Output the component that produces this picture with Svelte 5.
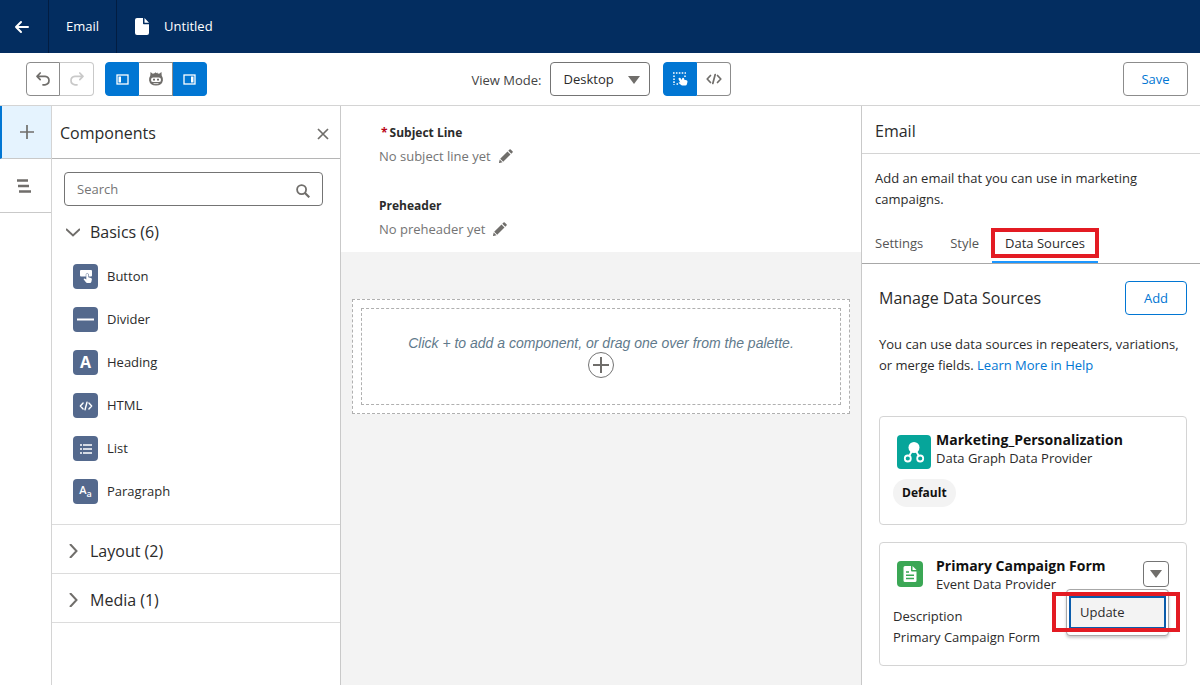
<script>
    let search = "";
    let viewMode = "Desktop";
    let activeTab = "Data Sources";
    let menuOpen = true;

    let basics = [
        { icon: "button", label: "Button" },
        { icon: "divider", label: "Divider" },
        { icon: "heading", label: "Heading" },
        { icon: "html", label: "HTML" },
        { icon: "list", label: "List" },
        { icon: "paragraph", label: "Paragraph" },
    ];

    let groups = [
        { name: "Basics", count: 6, open: true, items: basics },
        { name: "Layout", count: 2, open: false, items: [] },
        { name: "Media", count: 1, open: false, items: [] },
    ];

    let fields = [
        { label: "Subject Line", value: "No subject line yet", required: true },
        { label: "Preheader", value: "No preheader yet", required: false },
    ];

    let tabs = ["Settings", "Style", "Data Sources"];

    function toggleGroup(group) {
        group.open = !group.open;
        groups = groups;
    }
</script>

<div class="page">
    <header>
        <button class="back" aria-label="Back">
            <svg width="16" height="14" viewBox="0 0 16 14" fill="none" stroke="#fff" stroke-width="2" stroke-linecap="round" stroke-linejoin="round"><path d="M14 7H2M7 2L2 7l5 5" /></svg>
        </button>
        <div class="crumb">Email</div>
        <div class="doc">
            <svg width="14" height="17" viewBox="0 0 14 17" fill="#fff"><path d="M2 0h6v5.500q0 .8.800.800H14V15q0 2-2 2H2q-2 0-2-2V2Q0 0 2 0zM9.500 0L14 4.800H9.500z" /></svg>
            <span>Untitled</span>
        </div>
    </header>

    <div class="toolbar">
        <div class="tools">
            <div class="group">
                <button aria-label="Undo">
                    <svg width="16" height="16" viewBox="0 0 16 16" fill="none" stroke="#706e6b" stroke-width="1.700" stroke-linecap="round" stroke-linejoin="round"><path d="M5.200 2L2 5.300l3.200 3.300M2 5.300h8q4 .5 4 4.300t-4 4.200H8" /></svg>
                </button>
                <button class="off" aria-label="Redo" disabled>
                    <svg width="16" height="16" viewBox="0 0 16 16" fill="none" stroke="#c9c9c9" stroke-width="1.700" stroke-linecap="round" stroke-linejoin="round"><path d="M10.800 2L14 5.300l-3.200 3.300M14 5.300H6q-4 .5-4 4.300t4 4.200h2" /></svg>
                </button>
            </div>
            <div class="group">
                <button class="on" aria-label="Left panel">
                    <svg width="13" height="11" viewBox="0 0 13 11"><rect x="1" y="1" width="11" height="9" fill="none" stroke="#fff" stroke-width="1.300" /><path d="M2.500 2.500h2.500v6H2.500z" fill="#fff" /></svg>
                </button>
                <button aria-label="Einstein">
                    <svg width="14" height="14" viewBox="0 0 14 14"><path d="M1.500 0l2.300 1.800 1.700-.6L6.500.3l.8.9.9-.7.6.9 1.300.4L12.500 0l.2 3.600Q14 5.500 13.900 8.500 13 13.500 7 13.500T.1 8.500Q0 5.500 1.300 3.600z" fill="#706e6b" /><rect x="2" y="5.500" width="10" height="4.600" rx="2.200" fill="#fff" /><path d="M4 7.600h2M8 7.600h2" stroke="#706e6b" stroke-width="1.600" /><path d="M4.500 11.600h5" stroke="#fff" stroke-width=".8" /></svg>
                </button>
                <button class="on" aria-label="Right panel">
                    <svg width="13" height="11" viewBox="0 0 13 11"><rect x="1" y="1" width="11" height="9" fill="none" stroke="#fff" stroke-width="1.300" /><path d="M8 2.500h2.500v6H8z" fill="#fff" /></svg>
                </button>
            </div>
        </div>

        <div class="view">
            <label for="view-mode">View Mode:</label>
            <div class="select">
                <select id="view-mode" bind:value={viewMode}>
                    <option>Desktop</option>
                    <option>Mobile</option>
                </select>
                <svg width="12" height="8" viewBox="0 0 12 8"><path d="M0 0h12L6 8z" fill="#706e6b" /></svg>
            </div>
            <div class="group">
                <button class="on" aria-label="Canvas view">
                    <svg width="16" height="16" viewBox="0 0 16 16"><path d="M1 2h13M2 4.500V14M13 4.500V7M4.500 13H7" fill="none" stroke="#fff" stroke-width="1.500" stroke-dasharray="1.600 1.300" /><path d="M6.800 7q1-.8 1.800.3l1.200 1.700.5-2q1.200-.8 1.800.4l.2 1.400 2.200.4q1 .4 1 1.500l-.6 2.500q-.3 1.300-1.600 1.300h-3q-.9 0-1.500-.8L6.500 11.800q.3-1 1.500-.5l.3.1L6.600 8.200q-.2-.8.200-1.200z" fill="#fff" /></svg>
                </button>
                <button aria-label="Code view">
                    <svg width="16" height="12" viewBox="0 0 16 12" fill="none" stroke="#706e6b" stroke-width="1.700" stroke-linecap="round" stroke-linejoin="round"><path d="M4.500 2.500L1.200 6l3.300 3.500M11.500 2.500L14.800 6l-3.300 3.500M9.200 1.500l-2.400 9" /></svg>
                </button>
            </div>
        </div>

        <button class="save">Save</button>
    </div>

    <main>
        <nav>
            <button class="current" aria-label="Components">
                <svg width="14" height="14" viewBox="0 0 14 14" stroke="#706e6b" stroke-width="1.700"><path d="M7 0v14M0 7h14" /></svg>
            </button>
            <button aria-label="Structure">
                <svg width="14" height="14" viewBox="0 0 14 14" stroke="#706e6b" stroke-width="2.600"><path d="M0 1.500h11M1 7h11M2 12.500h12" /></svg>
            </button>
        </nav>

        <aside class="palette">
            <div class="palette-head">
                <h2>Components</h2>
                <button aria-label="Close">
                    <svg width="12" height="12" viewBox="0 0 12 12" stroke="#706e6b" stroke-width="1.700"><path d="M1 1l10 10M11 1L1 11" /></svg>
                </button>
            </div>
            <div class="search">
                <input type="text" placeholder="Search" aria-label="Search" bind:value={search} />
                <svg width="14" height="14" viewBox="0 0 14 14" fill="none" stroke="#706e6b" stroke-width="1.800"><circle cx="5.600" cy="5.600" r="4.500" /><path d="M9 9l4.300 4.300" stroke-width="2.200" /></svg>
            </div>
            {#each groups as group}
                <section>
                    <button class="fold" aria-expanded={group.open} on:click={() => toggleGroup(group)}>
                        <svg class:open={group.open} width="14" height="14" viewBox="0 0 14 14" fill="none" stroke="#706e6b" stroke-width="2"><path d="M4 0l6.500 7L4 14" /></svg>
                        {group.name} ({group.count})
                    </button>
                    {#if group.open}
                        <ul>
                            {#each group.items as item}
                                <li>
                                    <span class="tile">
                                        {#if item.icon === "button"}
                                            <svg width="14" height="14" viewBox="0 0 14 14" fill="#fff"><rect x="1" y="0" width="12" height="6.500" rx="1" /><path d="M7.300 4q1-1 2 0v3.300l2.600.6q1.100.4 1 1.400l-.5 2.400q-.3 1.300-1.400 1.300H8.200q-.8 0-1.300-.8L4.600 9.300q.2-1.200 1.500-.6l1.200.7z" stroke="#54698d" stroke-width="1" paint-order="stroke" /></svg>
                                        {:else if item.icon === "divider"}
                                            <svg width="17" height="3" viewBox="0 0 17 3"><path d="M0 1.500h17" stroke="#fff" stroke-width="2" /></svg>
                                        {:else if item.icon === "heading"}
                                            <b>A</b>
                                        {:else if item.icon === "html"}
                                            <svg width="14" height="10" viewBox="0 0 16 12" fill="none" stroke="#fff" stroke-width="1.700" stroke-linecap="round" stroke-linejoin="round"><path d="M4.500 2.500L1.200 6l3.300 3.500M11.500 2.500L14.800 6l-3.300 3.500M9.200 1.500l-2.400 9" /></svg>
                                        {:else if item.icon === "list"}
                                            <svg width="12" height="10" viewBox="0 0 12 10" stroke="#fff" stroke-width="1.500"><path d="M0 1h2M3 1h9M0 5h2M3 5h9M0 9h2M3 9h9" /></svg>
                                        {:else}
                                            <span class="letters">A<small>a</small></span>
                                        {/if}
                                    </span>
                                    {item.label}
                                </li>
                            {/each}
                        </ul>
                    {/if}
                </section>
            {/each}
        </aside>

        <div class="canvas">
            <div class="fields">
                {#each fields as field}
                    <div class="field">
                        <h3>{#if field.required}<abbr title="required">*</abbr>{/if}{field.label}</h3>
                        <p>
                            {field.value}
                            <button aria-label={"Edit " + field.label}>
                                <svg width="14" height="14" viewBox="0 0 14 14" fill="#706e6b"><path d="M10.500.5q.6-.6 1.200 0l1.800 1.800q.6.6 0 1.200L12.300 4.700 9.300 1.700zM8.500 2.500l3 3-7.300 7.300-3-3zM.7 10.500l2.800 2.800L.5 14q-.6 0-.5-.6z" /></svg>
                            </button>
                        </p>
                    </div>
                {/each}
            </div>
            <div class="drop">
                <div class="slot">
                    <p>Click + to add a component, or drag one over from the palette.</p>
                    <button aria-label="Add a component">
                        <svg width="16" height="16" viewBox="0 0 16 16" stroke="#706e6b" stroke-width="2"><path d="M8 0v16M0 8h16" /></svg>
                    </button>
                </div>
            </div>
        </div>

        <aside class="props">
            <h2>Email</h2>
            <p class="about">Add an email that you can use in marketing campaigns.</p>
            <div class="tabs" role="tablist">
                {#each tabs as tab}
                    <button role="tab" class:active={tab === activeTab} aria-selected={tab === activeTab} on:click={() => (activeTab = tab)}>{tab}</button>
                {/each}
            </div>
            <div class="sources">
                <div class="manage">
                    <h2>Manage Data Sources</h2>
                    <button class="add">Add</button>
                </div>
                <p class="hint">You can use data sources in repeaters, variations, or merge fields. <a href="#help">Learn More in Help</a></p>

                <article class="card">
                    <div class="card-head">
                        <svg class="big" width="34" height="34" viewBox="0 0 34 34"><rect width="34" height="34" rx="4" fill="#06a59a" /><circle cx="17" cy="12.500" r="5.500" fill="#fff" /><g fill="none" stroke="#fff" stroke-width="1.800"><circle cx="10.800" cy="23.500" r="3" /><circle cx="23.200" cy="23.500" r="3" /><path d="M15 16l-2.800 5M19 16l2.800 5" /></g></svg>
                        <div class="name">
                            <h3>Marketing_Personalization</h3>
                            <p>Data Graph Data Provider</p>
                        </div>
                    </div>
                    <span class="pill">Default</span>
                </article>

                <article class="card">
                    <div class="card-head">
                        <svg width="26" height="26" viewBox="0 0 26 26"><rect width="26" height="26" rx="4" fill="#3ba755" /><path d="M8 5h6v4.500q0 1 1 1h4.500V19.500q0 1.500-1.500 1.500H8q-1.500 0-1.500-1.500v-13Q6.500 5 8 5zM15.500 5l4 4h-4z" fill="#fff" /><path d="M9 11h3M9 14.200h8M9 17.500h8" stroke="#3ba755" stroke-width="1.500" /></svg>
                        <div class="name">
                            <h3>Primary Campaign Form</h3>
                            <p>Event Data Provider</p>
                        </div>
                        <div class="actions">
                            <button class="more" aria-label="Show actions" on:click={() => (menuOpen = !menuOpen)}>
                                <svg width="12" height="8" viewBox="0 0 12 8"><path d="M0 0h12L6 8z" fill="#706e6b" /></svg>
                            </button>
                            {#if menuOpen}
                                <div class="menu">
                                    <button>Update</button>
                                </div>
                            {/if}
                        </div>
                    </div>
                    <dl>
                        <dt>Description</dt>
                        <dd>Primary Campaign Form</dd>
                    </dl>
                </article>
            </div>
        </aside>
    </main>
</div>

<style>
    :global(body) {
        margin: 0;
    }
    .page {
        display: flex;
        flex-direction: column;
        min-height: 100vh;
        background: #fff;
        color: #2b2b2b;
        font: 13px/21px "Segoe UI", "Open Sans", "Noto Sans", sans-serif;
    }
    .page * {
        box-sizing: border-box;
    }
    button, input, select {
        font: inherit;
        color: inherit;
    }
    button {
        display: flex;
        align-items: center;
        justify-content: center;
        padding: 0;
        border: 0;
        background: none;
        cursor: pointer;
    }
    h2, h3, p, ul, dl, dd {
        margin: 0;
        padding: 0;
    }
    h2 {
        font-size: 16px;
        font-weight: 400;
    }
    svg {
        display: block;
        flex: none;
    }

    header {
        display: flex;
        height: 53px;
        background: #032d60;
        color: #fff;
    }
    .back, .crumb, .doc {
        display: flex;
        align-items: center;
    }
    .back {
        width: 49px;
        padding-right: 4px;
        border-right: 1px solid #021d42;
    }
    .crumb {
        padding: 0 17px;
        border-right: 1px solid #021d42;
    }
    .doc {
        gap: 15px;
        padding-left: 18px;
    }

    .toolbar {
        display: grid;
        grid-template-columns: 1fr auto 1fr;
        align-items: center;
        height: 53px;
        padding: 0 12px 0 26px;
        border-bottom: 1px solid #d4d4d4;
    }
    .tools, .view, .group {
        display: flex;
        align-items: center;
    }
    .tools {
        gap: 11px;
    }
    .view {
        padding-right: 11px;
    }
    .group button {
        width: 34px;
        height: 34px;
        border: 1px solid #8c8c8c;
    }
    .group button:first-child {
        border-radius: 4px 0 0 4px;
    }
    .group button:last-child {
        border-radius: 0 4px 4px 0;
    }
    .group button + button {
        border-left: 0;
    }
    .group .on {
        background: #0176d3;
        border-color: #0176d3;
    }
    .group .off {
        border-color: #c9c9c9;
    }
    .view label {
        margin-right: 9px;
        padding-top: 3px;
        color: #444;
    }
    .select {
        position: relative;
        margin-right: 13px;
    }
    .select select {
        width: 100px;
        height: 34px;
        padding: 0 12px;
        border: 1px solid #747474;
        border-radius: 4px;
        background: #fff;
        appearance: none;
    }
    .select svg {
        position: absolute;
        right: 10px;
        top: 14px;
        pointer-events: none;
    }
    .save {
        justify-self: end;
        width: 65px;
        height: 34px;
        border: 1px solid #8c8c8c;
        border-radius: 4px;
        color: #0176d3;
    }

    main {
        display: grid;
        grid-template-columns: 52px 289px 1fr 339px;
        flex: 1;
    }
    nav {
        border-right: 1px solid #d4d4d4;
    }
    nav button {
        width: 100%;
        height: 54px;
        border-bottom: 1px solid #c9c9c9;
        padding-right: 3px;
    }
    nav .current {
        height: 53px;
        background: #e5f3fe;
        border-left: 2px solid #0176d3;
        padding-right: 0;
    }
    .palette {
        border-right: 1px solid #c9c9c9;
    }
    .palette-head {
        display: flex;
        align-items: center;
        justify-content: space-between;
        height: 53px;
        padding: 3px 11px 0 8px;
        border-bottom: 1px solid #b5b5b5;
    }
    .search {
        position: relative;
        margin: 13px 17px 8px 12px;
    }
    .search input {
        display: block;
        width: 100%;
        height: 34px;
        padding: 0 12px;
        border: 1px solid #747474;
        border-radius: 4px;
    }
    .search input::placeholder {
        color: #757575;
        opacity: 1;
    }
    .search svg {
        position: absolute;
        right: 13px;
        top: 12px;
    }
    section {
        border-bottom: 1px solid #dcdcdc;
    }
    .fold {
        width: 100%;
        height: 48px;
        justify-content: flex-start;
        gap: 10px;
        padding: 4px 14px 0;
        font-size: 16px;
    }
    .fold[aria-expanded="true"] {
        height: 36px;
        padding-top: 0;
    }
    .fold .open {
        transform: rotate(90deg);
    }
    ul {
        padding: 5px 21px 11px;
        list-style: none;
    }
    li {
        display: flex;
        align-items: center;
        gap: 9px;
        height: 43px;
    }
    .tile {
        display: flex;
        align-items: center;
        justify-content: center;
        width: 25px;
        height: 25px;
        border-radius: 4px;
        background: #54698d;
        color: #fff;
    }
    .tile b {
        font-size: 16px;
    }
    .letters {
        font-size: 11px;
        font-weight: 600;
    }
    .letters small {
        font-size: 9px;
        vertical-align: sub;
    }

    .canvas {
        background: #f3f3f3;
    }
    .fields {
        display: flex;
        flex-direction: column;
        gap: 27px;
        padding: 16px 38px 11px;
        background: #fff;
    }
    .field h3 {
        font-size: 12px;
        font-weight: 700;
        line-height: 22px;
    }
    .field abbr {
        margin: 0 2px;
        color: #ba0517;
        text-decoration: none;
    }
    .field p {
        display: flex;
        align-items: center;
        gap: 8px;
        line-height: 24px;
        color: #747474;
    }
    .drop {
        margin: 47px 11px;
        padding: 8px;
        border: 1px dashed #b0b0b0;
        background: #fff;
    }
    .slot {
        display: flex;
        flex-direction: column;
        align-items: center;
        padding: 25px 16px 26px;
        border: 1px dashed #b0b0b0;
    }
    .slot p {
        font: italic 14px/18px "Liberation Sans", Arial, sans-serif;
        color: #5f7a8c;
        text-align: center;
    }
    .slot button {
        width: 26px;
        height: 26px;
        border: 1px solid #747474;
        border-radius: 50%;
    }

    .props {
        border-left: 1px solid #c9c9c9;
    }
    .props > h2 {
        height: 48px;
        padding-left: 13px;
        border-bottom: 1px solid #d4d4d4;
        line-height: 50px;
    }
    .about {
        padding: 14px 40px 0 13px;
    }
    .tabs {
        display: flex;
        gap: 27px;
        margin-top: 13px;
        padding-left: 13px;
        border-bottom: 1px solid #a8a8a8;
    }
    .tabs button {
        height: 40px;
        color: #555;
    }
    .tabs .active {
        position: relative;
        margin-left: -14px;
        padding: 0 13px;
        color: #2b2b2b;
        box-shadow: inset 0 -2px #1b96ff;
    }
    /* red callout frames lie over the tab and the open menu */
    .tabs .active::after, .menu::after {
        content: "";
        position: absolute;
        border: 4px solid #e31b23;
        pointer-events: none;
    }
    .tabs .active::after {
        inset: 5px -1px;
    }
    .sources {
        padding: 17px 13px 20px 17px;
    }
    .manage {
        display: flex;
        align-items: center;
        justify-content: space-between;
    }
    .add {
        width: 62px;
        height: 34px;
        border: 1px solid #0176d3;
        border-radius: 4px;
        color: #0176d3;
    }
    .hint {
        margin: 19px 0 40px;
    }
    .hint a {
        color: #0176d3;
        text-decoration: none;
    }
    .card {
        margin-bottom: 17px;
        padding: 14px 17px 17px 13px;
        border: 1px solid #d4d4d4;
        border-radius: 4px;
    }
    .card-head {
        display: flex;
        gap: 13px;
        padding: 4px 0 0 4px;
    }
    .card-head .big {
        margin-right: -8px;
    }
    .name {
        flex: 1;
        margin-top: -5px;
        line-height: 18px;
    }
    .name h3 {
        font-size: 14px;
        line-height: 19px;
        color: #111;
    }
    .pill {
        display: inline-block;
        margin-top: 10px;
        padding: 0 9px;
        border-radius: 14px;
        background: #f3f3f3;
        color: #111;
        font-size: 12px;
        font-weight: 700;
        line-height: 28px;
    }
    .actions {
        position: relative;
    }
    .more {
        width: 26px;
        height: 26px;
        border: 1px solid #747474;
        border-radius: 4px;
    }
    .menu {
        position: absolute;
        right: 0;
        top: 28px;
        width: 103px;
        padding: 6px 2px;
        border: 1px solid #a8a8a8;
        border-radius: 4px;
        background: #fff;
        box-shadow: 0 2px 3px #0003;
    }
    .menu::after {
        inset: 2px -12px 3px -15px;
    }
    .menu button {
        justify-content: flex-start;
        width: 100%;
        height: 33px;
        padding-left: 9px;
        border: 2px solid #0b5cab;
        background: #f3f3f3;
    }
    dl {
        margin-top: 13px;
    }
</style>
